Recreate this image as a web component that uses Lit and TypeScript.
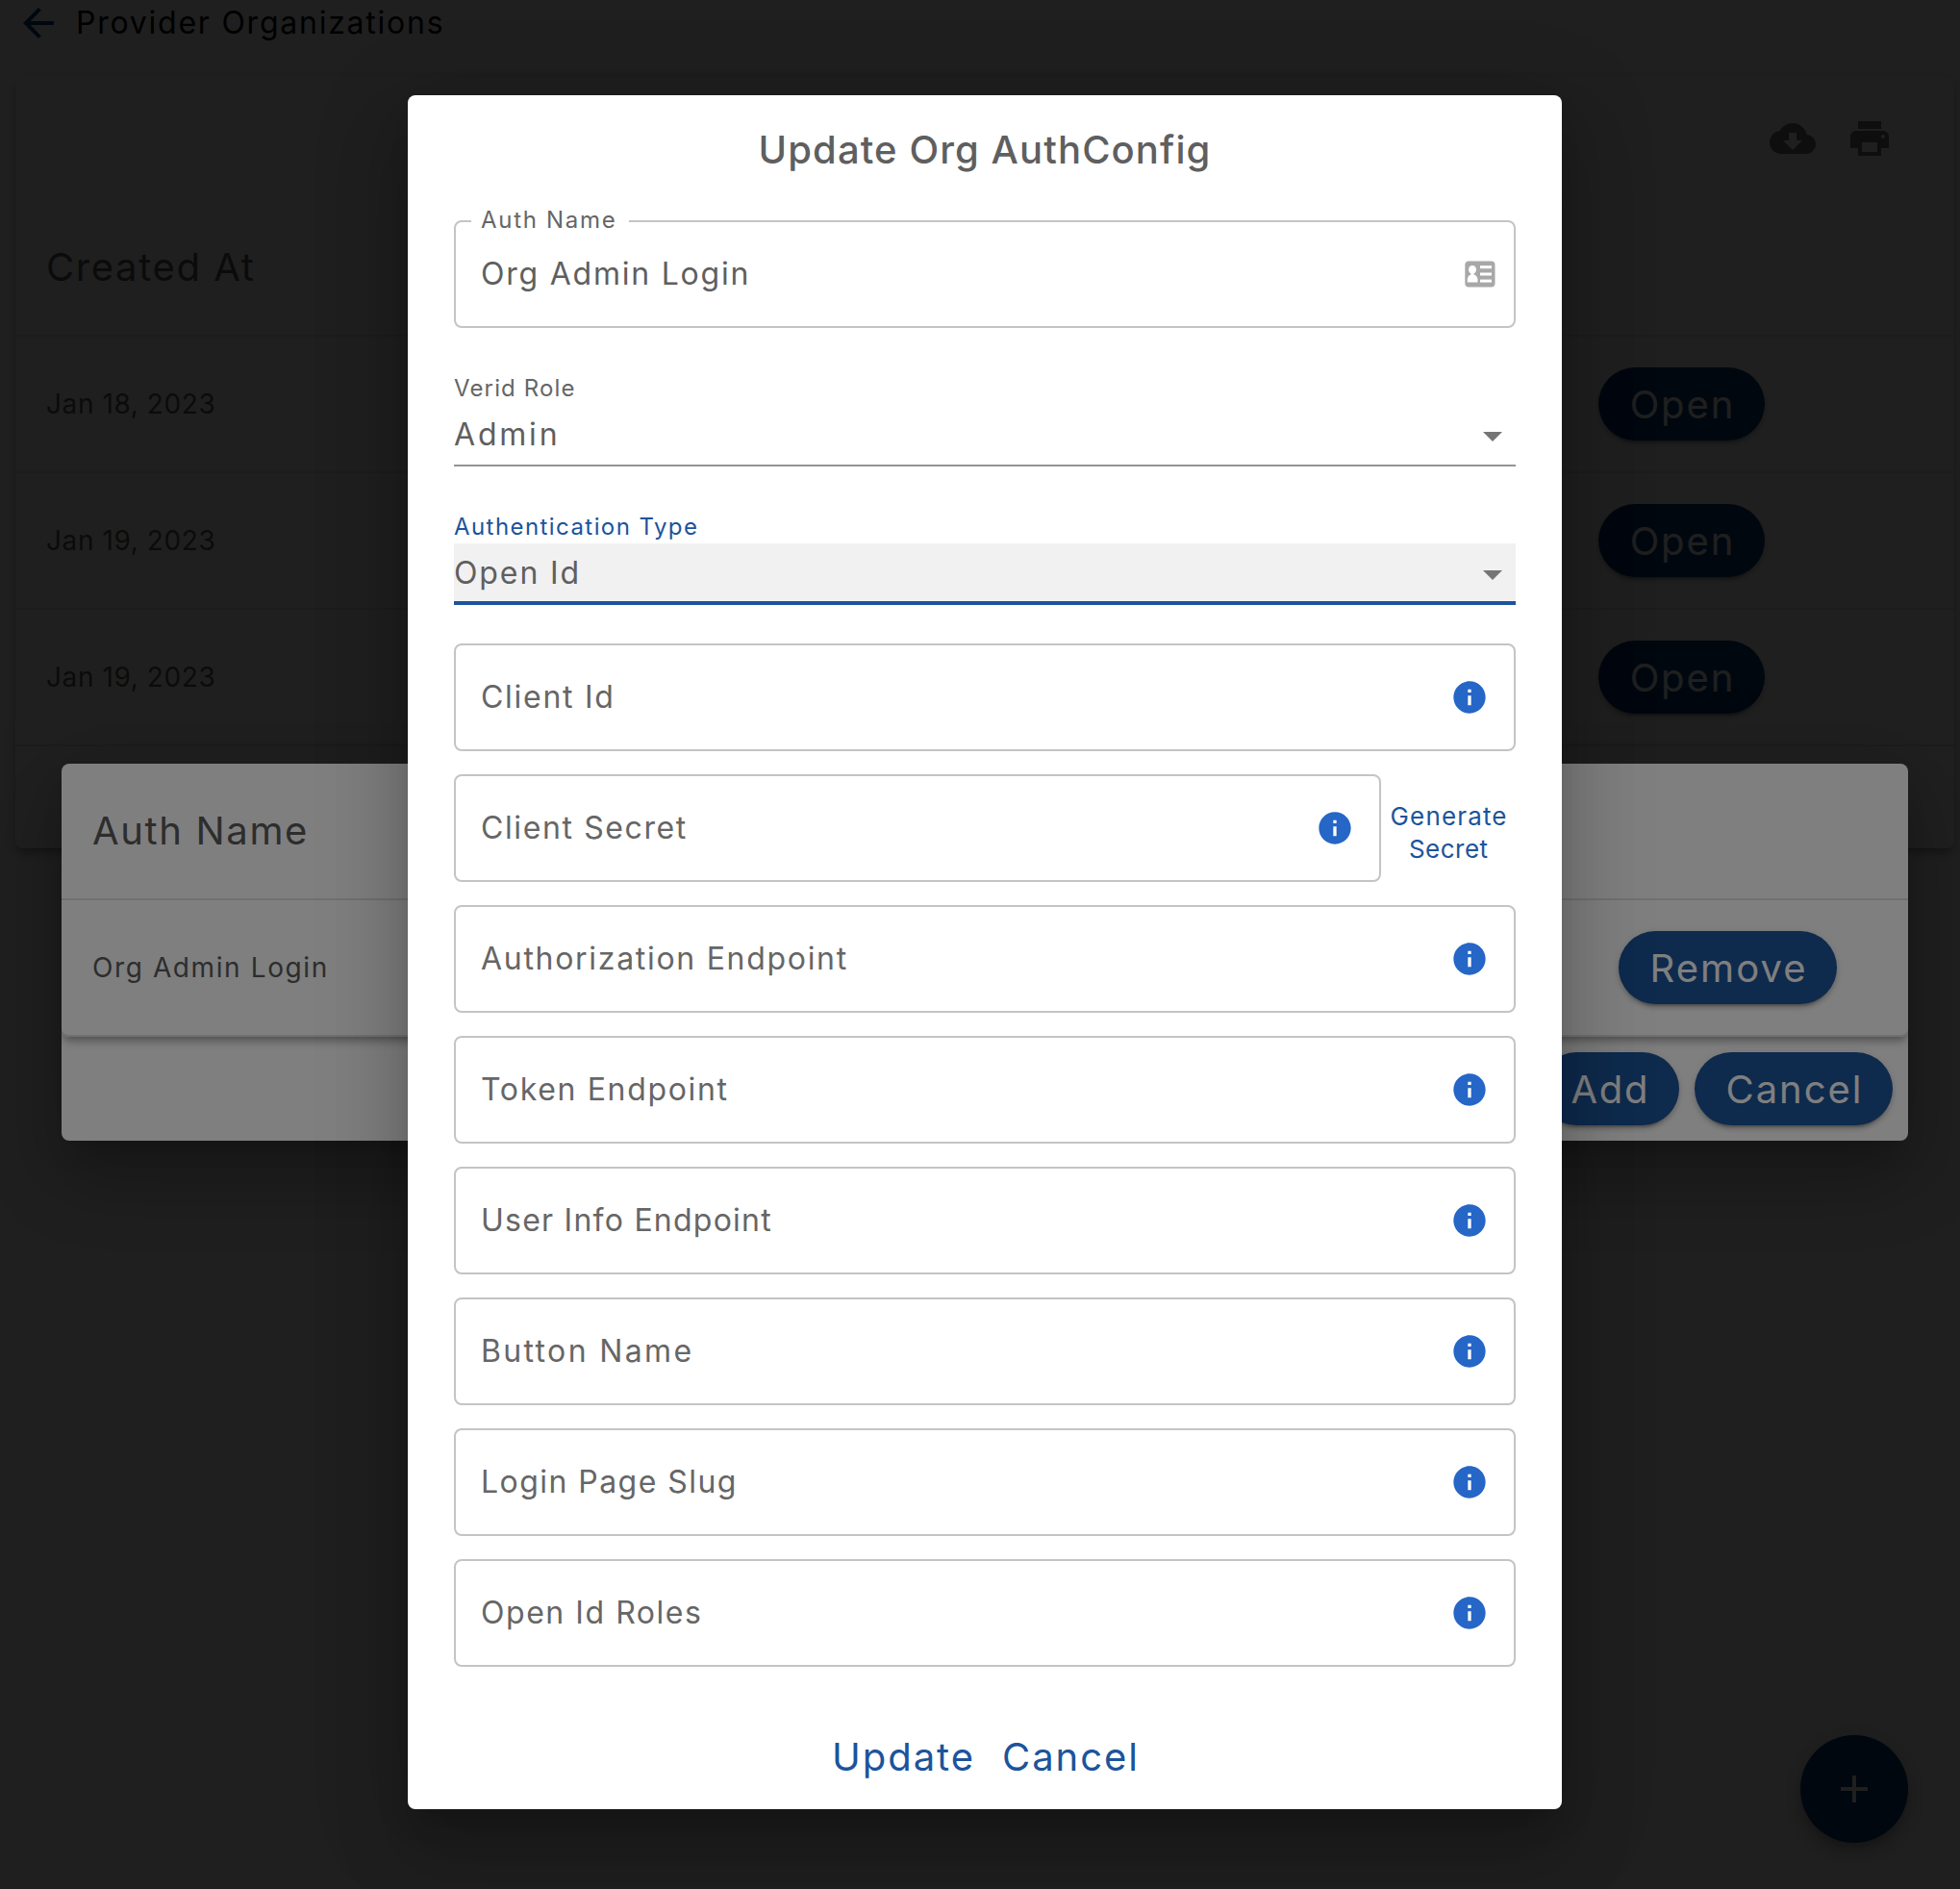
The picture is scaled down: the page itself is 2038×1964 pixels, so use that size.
import { LitElement, html, css, svg } from "lit";
import { customElement, property } from "lit/decorators.js";
import { styleMap } from "lit/directives/style-map.js";

interface Entry {
  text: string;
  /** letter tracking in px */
  tracking: number;
}

const rows: Entry[] = [
  { text: "Jan 18, 2023", tracking: 0.59 },
  { text: "Jan 19, 2023", tracking: 0.59 },
  { text: "Jan 19, 2023", tracking: 0.59 },
];

const endpointFields: Entry[] = [
  { text: "Authorization Endpoint", tracking: 1.7 },
  { text: "Token Endpoint", tracking: 1.66 },
  { text: "User Info Endpoint", tracking: 1.24 },
  { text: "Button Name", tracking: 2.35 },
  { text: "Login Page Slug", tracking: 1.45 },
  { text: "Open Id Roles", tracking: 1.54 },
];

const paths = {
  back: "M20 11H7.83l5.59-5.59L12 4l-8 8 8 8 1.41-1.41L7.83 13H20v-2z",
  cloud:
    "M19.35 10.04C18.67 6.59 15.64 4 12 4 9.11 4 6.6 5.64 5.35 8.04 2.34 8.36 0 10.91 0 14c0 3.31 2.69 6 6 6h13c2.76 0 5-2.24 5-5 0-2.64-2.05-4.78-4.65-4.96zM17 13l-5 5-5-5h3V9h4v4h3z",
  print:
    "M19 8H5c-1.66 0-3 1.34-3 3v6h4v4h12v-4h4v-6c0-1.66-1.34-3-3-3zm-3 11H8v-5h8v5zm3-7c-.55 0-1-.45-1-1s.45-1 1-1 1 .45 1 1-.45 1-1 1zm-1-9H6v4h12V3z",
  info: "M12 2C6.48 2 2 6.48 2 12s4.48 10 10 10 10-4.48 10-10S17.52 2 12 2zm1 15h-2v-6h2v6zm0-8h-2V7h2v2z",
  drop: "M7 10l5 5 5-5z",
  add: "M19 13h-6v6h-2v-6H5v-2h6V5h2v6h6v2z",
};

const icon = (name: keyof typeof paths, cls: string) =>
  html`<svg class=${cls} viewBox="0 0 24 24" fill="currentColor">${svg`<path d=${paths[name]}></path>`}</svg>`;

const tracked = (e: Entry) =>
  html`<span style=${styleMap({ letterSpacing: `${e.tracking}px`, marginRight: `${-e.tracking}px` })}>${e.text}</span>`;

@customElement("outlined-field")
export class OutlinedField extends LitElement {
  @property({ attribute: false }) entry: Entry = { text: "", tracking: 0 };

  static styles = css`
    :host { display: block; }
    .box {
      box-sizing: border-box;
      height: 112px;
      border: 2px solid #c4c4c4;
      border-radius: 8px;
      padding: 0 26px;
      display: flex;
      align-items: center;
      justify-content: space-between;
    }
    .text { color: #666; font-size: 32px; line-height: 44px; padding-bottom: 1px; white-space: nowrap; }
    .info { width: 40px; height: 40px; color: #2566c7; flex: none; }
  `;

  render() {
    return html`<div class="box">
      <div class="text">${tracked(this.entry)}</div>
      ${icon("info", "info")}
    </div>`;
  }
}

@customElement("app-root")
export class AppRoot extends LitElement {
  static styles = css`
    :host {
      display: block;
      position: relative;
      width: 2038px;
      height: 1964px;
      overflow: hidden;
      background: #fafafa;
      font-family: Inter, "Liberation Sans", sans-serif;
      color: #5a5a5a;
      white-space: nowrap;
    }
    .layer {
      position: absolute;
      top: 0;
      left: 0;
      width: 2048px;
      height: 1980px;
      display: flex;
      align-items: center;
      justify-content: center;
    }
    .dim2 { background: rgba(0, 0, 0, 0.75); }
    .dim { background: rgba(0, 0, 0, 0.5); }

    .page { width: 2048px; }
    .topbar { display: flex; align-items: center; height: 48px; padding-left: 16px; }
    .i48 { width: 48px; height: 48px; display: block; flex: none; }
    .topbar .i48 { color: #0c3c7c; }
    .crumb { color: #000; font-size: 32px; line-height: 46px; letter-spacing: 1.76px; padding: 0 0 1px 15px; }
    .card {
      margin: 32px 16px 0;
      height: 802px;
      border-radius: 8px;
      background: #fcfcfc;
      box-shadow: 0 6px 6px -4px rgba(0,0,0,.2), 0 6px 8px 0 rgba(0,0,0,.14), 0 2px 16px 0 rgba(0,0,0,.12);
    }
    .tools { display: flex; justify-content: flex-end; gap: 32px; padding: 40px 64px; color: #707070; }
    .row {
      box-sizing: border-box;
      height: 142px;
      border-bottom: 2px solid #e0e0e0;
      padding: 0 32px;
      display: flex;
      align-items: center;
      justify-content: space-between;
    }
    .head { font-size: 40px; line-height: 56px; }
    .created { letter-spacing: 1.6px; }
    .cell { font-size: 28px; line-height: 40px; padding-bottom: 1px; }
    .pill {
      height: 76px;
      border-radius: 38px;
      background: #1d549a;
      color: #fff;
      font-size: 40px;
      display: flex;
      align-items: center;
      justify-content: center;
      box-shadow: 0 6px 2px -4px rgba(0,0,0,.2), 0 4px 4px 0 rgba(0,0,0,.14), 0 2px 10px 0 rgba(0,0,0,.12);
    }
    .open { width: 173px; margin-right: 165px; background: #0b387a; color: #f8f8f8; }
    .remove { width: 227px; margin-right: 42px; }
    .add { width: 145px; }
    .cancel { width: 206px; }
    .fab {
      position: absolute;
      right: 64px;
      bottom: 64px;
      width: 112px;
      height: 112px;
      border-radius: 50%;
      background: #0b387a;
      color: #fafafa;
      display: flex;
      align-items: center;
      justify-content: center;
      box-shadow: 0 6px 10px -2px rgba(0,0,0,.2), 0 12px 20px 0 rgba(0,0,0,.14), 0 2px 36px 0 rgba(0,0,0,.12);
    }

    .dialog {
      background: #fff;
      border-radius: 8px;
      box-shadow: 0 22px 30px -14px rgba(0,0,0,.2), 0 48px 76px 6px rgba(0,0,0,.14), 0 18px 92px 16px rgba(0,0,0,.12);
    }
    .list { width: 1920px; height: 392px; }
    .paper {
      border-radius: 8px;
      box-shadow: 0 6px 6px -4px rgba(0,0,0,.2), 0 6px 8px 0 rgba(0,0,0,.14), 0 2px 16px 0 rgba(0,0,0,.12);
      clip-path: inset(0 0 -30px 0);
    }
    .paper .row:last-child { border-radius: 0 0 8px 8px; }
    .buttons { display: flex; justify-content: flex-end; gap: 16px; padding: 16px; }

    .form { box-sizing: border-box; width: 1200px; height: 1782px; padding: 0 48px; color: #5f5f5f; }
    .title {
      margin: 0;
      height: 114px;
      line-height: 114px;
      text-align: center;
      font-size: 40px;
      font-weight: 500;
      letter-spacing: 1.1px;
    }
    .named {
      position: relative;
      box-sizing: border-box;
      height: 112px;
      margin-top: 16px;
      border: 2px solid #c4c4c4;
      border-radius: 8px;
      padding: 0 19px 0 26px;
      display: flex;
      align-items: center;
      justify-content: space-between;
    }
    .legend {
      position: absolute;
      left: 16px;
      top: -16px;
      width: 164px;
      box-sizing: border-box;
      padding-left: 10px;
      background: #fff;
      font-size: 24px;
      line-height: 28px;
      letter-spacing: 1.7px;
      color: #666;
    }
    .value { font-size: 32px; line-height: 44px; }
    .contact { width: 32px; height: 28px; display: block; }
    .label { margin-top: 49px; height: 28px; line-height: 28px; font-size: 24px; color: #666; }
    .label.active { color: #1c549c; }
    .select {
      box-sizing: border-box;
      height: 64px;
      margin-top: 3px;
      border-bottom: 2px solid #949494;
      display: flex;
      align-items: center;
      justify-content: space-between;
    }
    .select .i48 { color: #757575; margin-top: 2px; }
    .select.active { background: #f1f1f1; border-bottom: 4px solid #1c549c; padding-top: 2px; }
    .fields { margin-top: 40px; display: flex; flex-direction: column; gap: 24px; }
    .secret { display: flex; }
    .secret outlined-field { width: 964px; }
    .generate {
      flex: 1;
      padding-top: 10px;
      display: flex;
      flex-direction: column;
      align-items: center;
      justify-content: center;
      font-size: 26px;
      line-height: 34px;
      color: #1c549c;
    }
    .actions {
      margin-top: 64px;
      height: 60px;
      line-height: 60px;
      display: flex;
      justify-content: center;
      gap: 30px;
      font-size: 40px;
      color: #1c549c;
    }
  `;

  private form() {
    return html`<div class="dialog form">
      <h2 class="title">Update Org AuthConfig</h2>
      <div class="named">
        <div class="legend">Auth Name</div>
        <div class="value">${tracked({ text: "Org Admin Login", tracking: 1.77 })}</div>
        <svg class="contact" viewBox="0 0 32 28">
          <rect x="0.3" y="0.5" width="31.2" height="27" rx="4" fill="#a8a8a8"></rect>
          <g fill="#fff">
            <ellipse cx="8" cy="9.3" rx="4" ry="4.4"></ellipse>
            <path d="M6.4 12h3.2v2.4c2.6.6 3.8 3 3.9 5.2v3H2.8v-3c.1-2.2 1.200-4.600 3.600-5.200z"></path>
            <rect x="16" y="5.2" width="12" height="3"></rect>
            <rect x="16" y="12.5" width="12" height="3"></rect>
            <rect x="16" y="19.6" width="12" height="3"></rect>
          </g>
        </svg>
      </div>
      <div class="label">${tracked({ text: "Verid Role", tracking: 1.13 })}</div>
      <div class="select">
        <div class="value">${tracked({ text: "Admin", tracking: 2.8 })}</div>
        ${icon("drop", "i48")}
      </div>
      <div class="label active">${tracked({ text: "Authentication Type", tracking: 1.43 })}</div>
      <div class="select active">
        <div class="value">${tracked({ text: "Open Id", tracking: 1.9 })}</div>
        ${icon("drop", "i48")}
      </div>
      <div class="fields">
        <outlined-field .entry=${{ text: "Client Id", tracking: 1.73 }}></outlined-field>
        <div class="secret">
          <outlined-field .entry=${{ text: "Client Secret", tracking: 1.61 }}></outlined-field>
          <div class="generate">
            ${tracked({ text: "Generate", tracking: 1.15 })}
            ${tracked({ text: "Secret", tracking: 0.5 })}
          </div>
        </div>
        ${endpointFields.map((f) => html`<outlined-field .entry=${f}></outlined-field>`)}
      </div>
      <div class="actions">
        ${tracked({ text: "Update", tracking: 1.95 })}
        ${tracked({ text: "Cancel", tracking: 1.95 })}
      </div>
    </div>`;
  }

  render() {
    return html`
      <div class="page">
        <div class="topbar">${icon("back", "i48")}<div class="crumb">Provider Organizations</div></div>
        <div class="card">
          <div class="tools">${icon("cloud", "i48")}${icon("print", "i48")}</div>
          <div class="row head"><div class="created">Created At</div></div>
          ${rows.map(
            (r) => html`<div class="row">
              <div class="cell">${tracked(r)}</div>
              <div class="pill open">${tracked({ text: "Open", tracking: 1.9 })}</div>
            </div>`
          )}
        </div>
      </div>
      <div class="layer"><div class="fab">${icon("add", "i48")}</div></div>
      <div class="layer dim2">
        <div class="dialog list">
          <div class="paper">
            <div class="row head">${tracked({ text: "Auth Name", tracking: 1.65 })}</div>
            <div class="row">
              <div class="cell">${tracked({ text: "Org Admin Login", tracking: 1.6 })}</div>
              <div class="pill remove">${tracked({ text: "Remove", tracking: 2.1 })}</div>
            </div>
          </div>
          <div class="buttons">
            <div class="pill add">${tracked({ text: "Add", tracking: 1.6 })}</div>
            <div class="pill cancel">${tracked({ text: "Cancel", tracking: 1.95 })}</div>
          </div>
        </div>
      </div>
      <div class="layer dim">${this.form()}</div>
    `;
  }
}
